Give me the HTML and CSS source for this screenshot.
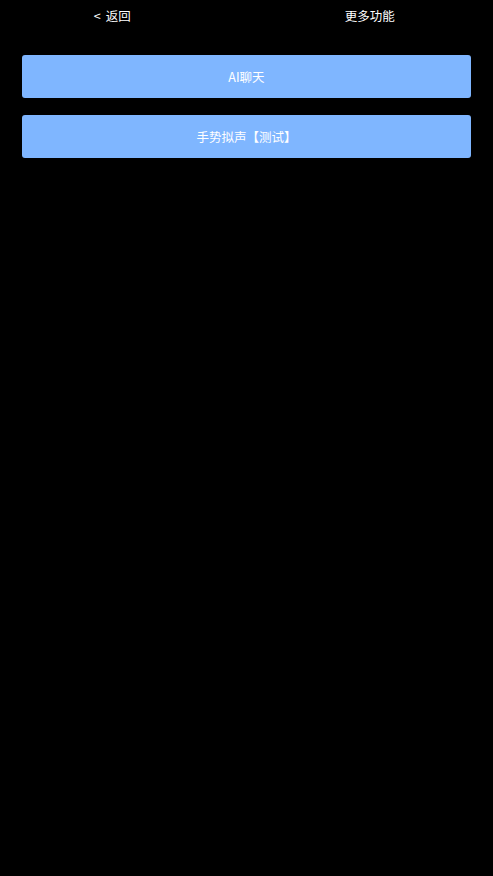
FILE: index.html
```html
<!DOCTYPE html>
<html lang="zh-CN">
<head>
<meta charset="utf-8">
<title>更多功能</title>
<link rel="stylesheet" href="styles.css">
</head>
<body>
  <header class="topbar">
    <div class="topbar-cell topbar-back"><span class="back-arrow">&lt;</span>返回</div>
    <div class="topbar-cell topbar-title">更多功能</div>
  </header>
  <main class="menu">
    <button class="menu-btn">AI聊天</button>
    <button class="menu-btn">手势拟声【测试】</button>
  </main>
</body>
</html>
```
FILE: styles.css
```css
html, body {
  margin: 0;
  padding: 0;
  background: #000;
  color: #fff;
  font-family: "Noto Sans CJK SC", "Noto Sans", sans-serif;
  font-size: 12.5px;
}
* {
  box-sizing: border-box;
}
.topbar {
  display: grid;
  grid-template-columns: 1fr 1fr;
  height: 33px;
  align-items: center;
}
.topbar-cell {
  text-align: center;
  line-height: 1;
}
.topbar-back {
  padding-right: 22px;
}
.back-arrow {
  margin-right: 5px;
}
.menu {
  display: flex;
  flex-direction: column;
  gap: 17px;
  padding: 22px 22px 0;
}
.menu-btn {
  display: block;
  width: 100%;
  height: 43px;
  border: none;
  border-radius: 3px;
  background: #7fb6ff;
  color: #fff;
  font-family: inherit;
  font-size: 12.5px;
  padding: 0;
}
```
